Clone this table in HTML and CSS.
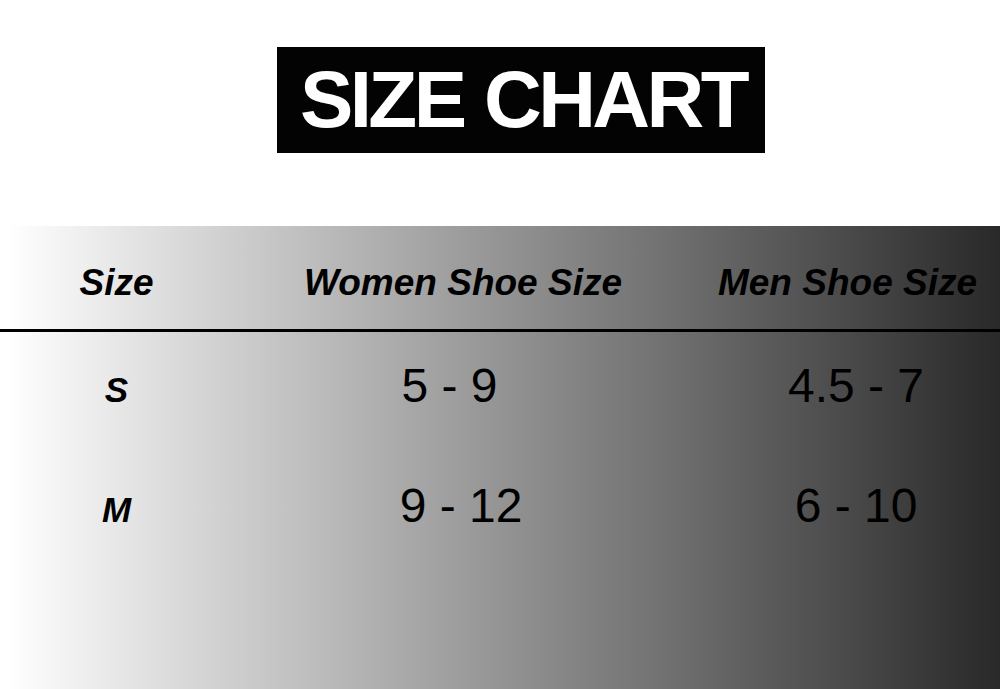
FILE: index.html
```html
<!DOCTYPE html>
<html>
<head>
<meta charset="utf-8">
<link rel="stylesheet" href="styles.css">
</head>
<body>
<div class="page">
  <header class="top">
    <h1 class="title">SIZE CHART</h1>
  </header>
  <section class="chart">
    <div class="row head">
      <div class="cell c1">Size</div>
      <div class="cell c2">Women Shoe Size</div>
      <div class="cell c3">Men Shoe Size</div>
    </div>
    <div class="row data first">
      <div class="cell c1 label">S</div>
      <div class="cell c2 val v-s2">5 - 9</div>
      <div class="cell c3 val v-s3">4.5 - 7</div>
    </div>
    <div class="row data">
      <div class="cell c1 label">M</div>
      <div class="cell c2 val v-m2">9 - 12</div>
      <div class="cell c3 val v-m3">6 - 10</div>
    </div>
  </section>
</div>
</body>
</html>
```

FILE: styles.css
```css
html, body {
  margin: 0;
  padding: 0;
  background: #fff;
}
body {
  font-family: "Liberation Sans", Arial, sans-serif;
  color: #000;
}
.page {
  width: 1000px;
  height: 689px;
  display: flex;
  flex-direction: column;
  overflow: hidden;
}
.top {
  height: 226px;
  box-sizing: border-box;
  padding: 47px 0 0 277px;
}
.title {
  margin: 0;
  width: 488px;
  height: 106px;
  background: #030303;
  color: #fff;
  font-size: 80px;
  font-weight: bold;
  line-height: 80px;
  letter-spacing: -3.6px;
  word-spacing: 2px;
  display: flex;
  align-items: center;
  justify-content: center;
  padding-left: 4px;
  box-sizing: border-box;
}
.chart {
  flex: 1;
  background: linear-gradient(to right, #ffffff 0%, #ffffff 0.8%, #949494 50%, #292929 100%);
}
.row {
  display: grid;
  grid-template-columns: 233px 460px 307px;
  align-items: baseline;
}
.cell {
  text-align: center;
}
.head {
  padding-top: 37px;
  padding-bottom: 26px;
  border-bottom: 3px solid #000;
  font-size: 37px;
  font-weight: bold;
  font-style: italic;
  line-height: 40px;
}
.head .c3 {
  padding-left: 2px;
}
.data {
  height: 120px;
  box-sizing: border-box;
}
.data.first {
  padding-top: 27px;
  height: 147px;
}
.label {
  font-size: 35px;
  font-weight: bold;
  font-style: italic;
  line-height: 40px;
}
.val {
  font-size: 48px;
  line-height: 54px;
}
.v-s2 { padding-right: 27px; }
.v-m2 { padding-right: 4px; }
.v-s3 { padding-left: 19px; }
.v-m3 { padding-left: 19px; }
```
